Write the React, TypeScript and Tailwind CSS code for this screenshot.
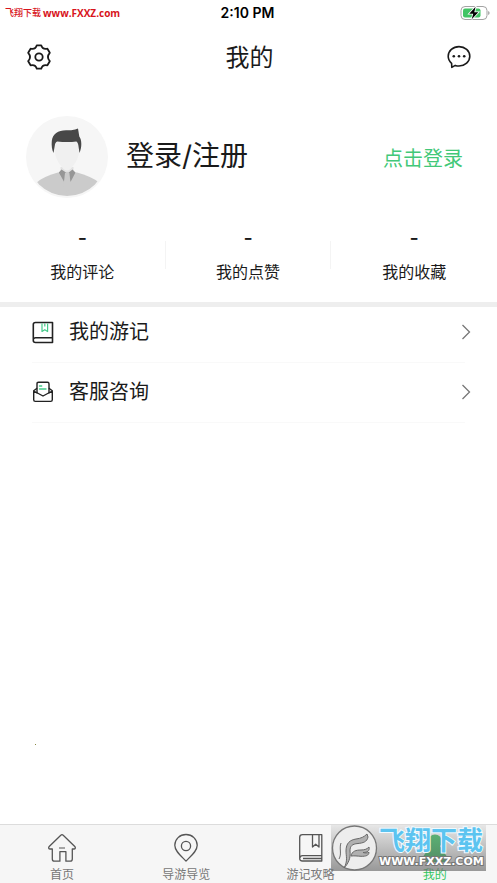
import type { ReactNode } from "react";

const stats = [
  { label: "我的评论", value: "-" },
  { label: "我的点赞", value: "-" },
  { label: "我的收藏", value: "-" },
];

const GearIcon = () => (
  <svg width="26" height="26" viewBox="0 0 26 26" fill="none" stroke="#1a1a1a" strokeWidth="1.8" strokeLinejoin="round">
    <path d="M10.800 1.300H15.200C16 4.200 18.200 5.400 21.400 4.700L23.800 8.800C21.600 11.300 21.600 14.700 23.800 17.200L21.400 21.300C18.200 20.600 16 21.800 15.200 24.700H10.800C10 21.800 7.800 20.600 4.600 21.300L2.200 17.200C4.400 14.700 4.400 11.300 2.200 8.800L4.600 4.700C7.800 5.400 10 4.200 10.800 1.300Z" />
    <circle cx="13" cy="13" r="3.700" />
  </svg>
);

const MessageIcon = () => (
  <svg width="24" height="24" viewBox="0 0 24 24" fill="none">
    <path
      d="M4.600 18.300C2.500 16.600 1.200 14.100 1.200 11.300c0-5.400 4.800-9.700 10.800-9.700s10.800 4.300 10.800 9.700S18 21 12 21c-1.400 0-2.600-.2-3.800-.6L4.800 22.400z"
      stroke="#1a1a1a"
      strokeWidth="1.600"
      strokeLinejoin="round"
    />
    <g fill="#1a1a1a">
      <circle cx="6.800" cy="11.200" r="1.300" />
      <circle cx="12" cy="11.200" r="1.300" />
      <circle cx="17.200" cy="11.200" r="1.300" />
    </g>
  </svg>
);

const BatteryIcon = () => (
  <svg width="30" height="16" viewBox="0 0 30 16" fill="none">
    <rect x="1" y="1.500" width="26" height="13" rx="4" stroke="#a3a3a3" />
    <rect x="3" y="3.500" width="17.500" height="9" rx="2" fill="#41c464" />
    <path d="M28.300 6v4c1.600-.6 1.600-3.400 0-4z" fill="#8a8a8a" />
    <path d="M15.600 1.800 9.200 8.700h4l-1.500 5.500L18.300 7.200h-4z" fill="#000" stroke="#fff" strokeWidth="1.600" paintOrder="stroke" />
  </svg>
);

const Avatar = () => (
  <svg width="82" height="82" viewBox="0 0 82 82" className="shrink-0">
    <defs>
      <clipPath id="avatar-clip">
        <circle cx="41" cy="40.500" r="39.500" />
      </clipPath>
    </defs>
    <circle cx="41" cy="41" r="41" fill="#f6f6f6" />
    <g clipPath="url(#avatar-clip)">
      <path d="M9 68c6-6 14-9 23-11.500h19c9 2.500 17 5.500 24 11.500v14H9z" fill="#cbcbcb" />
      <path d="M34.500 51h13v5L41 59l-6.500-3z" fill="#e2e2e2" />
      <path d="M28 26c0-3 5-4 13-4s13 1 13 4c0 13-3 19-7 24-2 3-4 4.500-6 4.500s-4-1.500-6-4.500c-4-5-7-11-7-24z" fill="#f0f0f0" />
      <path d="M27.500 37c-1.500-3-2.200-8-1.700-12 .8-7 6.200-10.700 14.200-10.700 5.500 0 8-.2 12-1.800l1.300 8c2.700 3.500 2.700 11 .2 16.500l-1.200-8c-.4-2-1-3-2-3.500-6 .8-13 .6-19 0-1.500.6-2.300 2-2.500 4z" fill="#484848" />
      <path d="m35.500 53.500 6 4-3.300 8.500-5.400-9.500zM46.500 53.500l-5 4 3 8.500 5-9.500z" fill="#969696" />
      <path d="m39 57 2.200-1 2.200 1 1.600 14-3.800 5-3.800-5z" fill="#cbcbcb" />
    </g>
  </svg>
);

const TravelBookIcon = () => (
  <svg width="22" height="23" viewBox="0 0 22 23" fill="none" strokeLinejoin="round">
    <path d="M3.500 1.500h17v20h-17c-1.500 0-2.200-.7-2.200-2V3.500c0-1.300.7-2 2.200-2zM1.500 18c.3-.9 1-1.300 2-1.300h17" stroke="#222" strokeWidth="1.600" />
    <path d="M10 2.500v8l2.800-1.800 2.800 1.800v-8M12.800 2.500v3" stroke="#45c98a" strokeWidth="1.200" />
  </svg>
);

const EnvelopeIcon = () => (
  <svg width="22" height="22" viewBox="0 0 22 22" fill="none" strokeLinejoin="round" strokeLinecap="round">
    <path d="M5 12V2.700c0-1 .4-1.500 1.500-1.500h9c1 0 1.500.5 1.500 1.500V12" stroke="#222" strokeWidth="1.400" />
    <path d="M4.700 7.500 1.700 9.800v9c0 1 .6 1.600 1.600 1.600h15.400c1 0 1.600-.6 1.600-1.600v-9l-3-2.300M1.700 10l9.300 5 9.300-5" stroke="#222" strokeWidth="1.400" />
    <path d="M7.500 5h2.200M7.500 8h6.500" stroke="#45c98a" strokeWidth="1.400" />
  </svg>
);

const ChevronIcon = () => (
  <svg width="10" height="16" viewBox="0 0 10 16" fill="none" stroke="#777" strokeWidth="1.300">
    <path d="m1.500 1 7 7-7 7" />
  </svg>
);

const HomeIcon = () => (
  <svg width="30" height="30" viewBox="0 0 30 30" fill="none" stroke="#555" strokeWidth="1.300" strokeLinejoin="round">
    <path d="M13.800 2.200c.8-.7 1.600-.7 2.400 0l11.600 11.300c1 1.200.6 2.500-1 2.500h-1.500v10c0 1.500-.7 2.200-2.200 2.200h-4.200V18.600h-6v9.600H7.500c-1.500 0-2.200-.7-2.200-2.200V16H3.200c-1.600 0-2-1.300-1-2.500z" />
    <path d="M12 15h6" strokeWidth="1" />
  </svg>
);

const PinIcon = () => (
  <svg width="30" height="30" viewBox="0 0 30 30" fill="none" stroke="#555" strokeWidth="1.300" strokeLinejoin="round">
    <path d="M15 28C9.500 22.500 3.800 18 3.800 12.200 3.800 6.200 8.800 1.500 15 1.500s11.200 4.700 11.200 10.700C26.200 18 20.500 22.500 15 28z" />
    <circle cx="15" cy="13" r="4.600" />
  </svg>
);

const GuideIcon = () => (
  <svg width="30" height="30" viewBox="0 0 30 30" fill="none" stroke="#555" strokeWidth="1.300" strokeLinejoin="round">
    <path d="M6.500 1.700h19.300v26.300H6.500c-1.800 0-2.800-.8-2.800-2.500V4.200c0-1.700 1-2.500 2.800-2.500zM3.900 25c.2-1.600 1.200-2.300 2.600-2.300h19.300M7 25.500h18.500" />
    <path d="M16.500 2v12l3.200-2.800L23 14V2" />
  </svg>
);

const MineIcon = () => (
  <svg width="30" height="30" viewBox="0 0 30 30" fill="#10b040">
    <circle cx="15" cy="8.500" r="7" />
    <path d="M10 13h10l3 5 5 7v4H2v-4l5-7z" />
  </svg>
);

const rows = [
  { label: "我的游记", icon: <TravelBookIcon /> },
  { label: "客服咨询", icon: <EnvelopeIcon /> },
];

interface TabProps {
  label: string;
  icon: ReactNode;
  active?: boolean;
}

const Tab = ({ label, icon, active }: TabProps) => (
  <a
    href="#"
    aria-current={active ? "page" : undefined}
    className={`flex flex-1 flex-col items-center gap-1 pt-2 ${active ? "text-[#2fc65b]" : "text-[#777]"}`}
  >
    {icon}
    <span className="text-xs">{label}</span>
  </a>
);

const SiteBadge = () => (
  <div className="pointer-events-none absolute right-[11px] bottom-3 flex h-[46px] w-[155px] items-center bg-linear-to-b from-[#d0d0d0]/40 to-[#707070]/70">
    <svg width="48" height="46" viewBox="0 0 48 46" className="shrink-0">
      <circle cx="23.500" cy="23" r="22" fill="#ededed" stroke="#777" strokeWidth="1.300" />
      <g fill="#b0b0b0" stroke="#686868" strokeWidth="1" strokeLinejoin="round">
        <path d="M13 43c4-7 2-12 2-17 0-8 4-11 10-12 5-.6 8-2 11-5l1 3c-1 5-5 6-10 6.500-6 .5-8 2.500-8 7.500 1 7-2 13-6 17z" />
        <path d="M20 31c1-5 5-6 10-6 4 0 6-1 8-3 1 4-2 5.500-6 5.500 2 .6 4 .6 6-.2 0 3-3 4.200-8 4-4-.3-6-.6-10-.3z" />
        <path d="M8 34c3-5 0-11 2-16" fill="none" />
      </g>
    </svg>
    <div className="flex flex-col whitespace-nowrap">
      <span className="text-[26px] leading-7 font-bold text-[#5cc4f0] [-webkit-text-stroke:2px_#f0faff] [paint-order:stroke_fill]">
        飞翔下载
      </span>
      <span className="font-['DejaVu_Sans',sans-serif] text-[11px] leading-[14px] font-bold text-white [-webkit-text-stroke:2px_#777] [paint-order:stroke_fill]">
        WWW.FXXZ.COM
      </span>
    </div>
  </div>
);

const App = () => {
  return (
    <div className="relative flex min-h-screen flex-col bg-white font-[Inter,'Noto_Sans_CJK_SC',sans-serif] text-[#1a1a1a]">
      <div className="grid h-[26px] grid-cols-3 items-center pr-[7px] pl-[5px]">
        <p className="flex items-center gap-[2px] text-[9px] whitespace-nowrap text-[#d8141c]">
          <span className="font-medium">飞翔下载</span>
          <span className="font-['Open_Sans',sans-serif] text-[10px] font-bold">www.FXXZ.com</span>
        </p>
        <p className="text-center text-sm font-semibold text-black">2:10 PM</p>
        <div className="flex justify-end">
          <BatteryIcon />
        </div>
      </div>

      <header className="flex h-[62px] items-center justify-between px-[26px]">
        <button type="button" aria-label="设置">
          <GearIcon />
        </button>
        <h1 className="pt-0.5 text-2xl">我的</h1>
        <button type="button" aria-label="消息">
          <MessageIcon />
        </button>
      </header>

      <section className="flex items-center pt-7 pr-[34px] pl-[26px]">
        <Avatar />
        <h2 className="ml-[18px] pb-0.5 text-[28px] leading-10">登录/注册</h2>
        <button type="button" className="ml-auto pt-1 text-xl text-[#42c878]">
          点击登录
        </button>
      </section>

      <section className="mt-7 flex h-[76px] items-start">
        {stats.map((stat, index) => (
          <div key={stat.label} className="flex flex-1 items-center">
            <div className="flex flex-1 flex-col items-center gap-2.5">
              <span className="text-xl leading-6 font-medium">{stat.value}</span>
              <span className="text-base leading-6">{stat.label}</span>
            </div>
            {index < stats.length - 1 && <div className="h-7 w-px bg-[#f4f4f4]" />}
          </div>
        ))}
      </section>

      <div className="h-[5px] bg-[#eee]" />

      <main className="flex-1">
        {rows.map((row) => (
          <div key={row.label}>
            <button type="button" className="flex h-[50px] w-full items-center pr-[26px] pl-8 text-left">
              {row.icon}
              <span className="ml-[15px] text-xl">{row.label}</span>
              <span className="ml-auto">
                <ChevronIcon />
              </span>
            </button>
            <div className="mt-[5px] mb-1 ml-8 mr-8 h-px bg-[#f9f9f9]" />
          </div>
        ))}
      </main>

      <div className="mb-[79px] ml-[35px] size-px bg-[#888844]" />

      <nav className="flex h-[59px] border-t border-[#dcdcdc] bg-[#f6f6f6]">
        <Tab label="首页" icon={<HomeIcon />} />
        <Tab label="导游导览" icon={<PinIcon />} />
        <Tab label="游记攻略" icon={<GuideIcon />} />
        <Tab label="我的" icon={<MineIcon />} active />
      </nav>

      <SiteBadge />
    </div>
  );
};

export default App;
